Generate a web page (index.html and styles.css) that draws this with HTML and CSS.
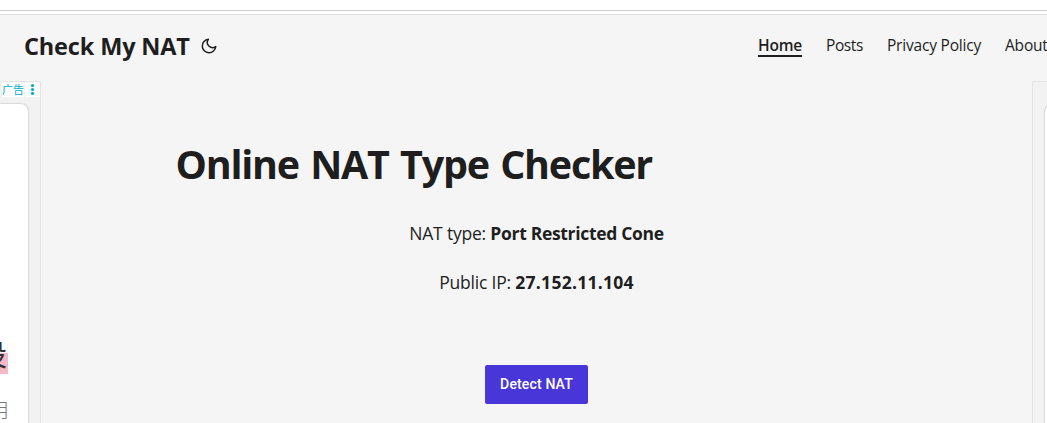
FILE: index.html
```
<!DOCTYPE html>
<html lang="en">

<head>
    <meta charset="UTF-8">
    <meta name="viewport" content="width=device-width, initial-scale=1.0">
    <title>Check My NAT</title>
    <link rel="stylesheet" href="styles.css">
</head>

<body>
    <div class="browser-line"></div>
    <header class="header">
        <div class="logo">
            <a href="#" class="logo-text">Check My NAT</a>
            <button class="theme-toggle" aria-label="Toggle theme">
                <svg width="18" height="18" viewBox="0 0 24 24" fill="none" stroke="currentColor" stroke-width="2" stroke-linecap="round" stroke-linejoin="round">
                    <path d="M21 12.79A9 9 0 1 1 11.21 3 7 7 0 0 0 21 12.79z"></path>
                </svg>
            </button>
        </div>
        <nav class="menu">
            <a href="#" class="active">Home</a>
            <a href="#" class="posts">Posts</a>
            <a href="#" class="privacy">Privacy Policy</a>
            <a href="#" class="about">About</a>
        </nav>
    </header>

    <div class="page">
        <aside class="ad ad-left">
            <div class="ad-bar">
                <span class="ad-label">广告</span>
                <span class="ad-more">
                    <svg width="5" height="11" viewBox="0 0 5 11" fill="currentColor">
                        <circle cx="2.5" cy="1.6" r="1.6"></circle>
                        <circle cx="2.5" cy="5.5" r="1.6"></circle>
                        <circle cx="2.5" cy="9.4" r="1.6"></circle>
                    </svg>
                </span>
            </div>
            <div class="ad-card">
                <div class="ad-title">设</div>
                <div class="ad-text">用</div>
            </div>
        </aside>

        <main class="main">
            <h1>Online NAT Type Checker</h1>
            <p class="nat">NAT type: <b>Port Restricted Cone</b></p>
            <p class="ip">Public IP: <b>27.152.11.104</b></p>
            <button class="detect">Detect NAT</button>
        </main>

        <aside class="ad ad-right">
            <div class="ad-card"></div>
        </aside>
    </div>
</body>

</html>
```

FILE: styles.css
```
* {
    margin: 0;
    padding: 0;
    box-sizing: border-box;
}

body {
    height: 423px;
    overflow: hidden;
    background: #f5f5f5;
    color: #1e1e1e;
    font-family: "Segoe UI", "Open Sans", "Noto Sans CJK SC", sans-serif;
}

a {
    color: inherit;
    text-decoration: none;
}

button {
    border: 0;
    background: none;
    color: inherit;
}

.browser-line {
    height: 15px;
    background: linear-gradient(#cccccc, #cccccc) 0 10px / 100% 1px no-repeat, #ffffff;
    border-bottom: 1px solid #dddddd;
}

/* header */
.header {
    display: flex;
    height: 66px;
    padding-left: 24px;
}

.logo {
    display: flex;
    width: 734px;
    flex-shrink: 0;
}

.logo-text {
    width: 176px;
    font-size: 23.5px;
    font-weight: 700;
    letter-spacing: -0.15px;
    line-height: 62px;
    white-space: nowrap;
}

.theme-toggle {
    height: 62px;
}

.theme-toggle svg {
    display: block;
}

.menu {
    display: flex;
    gap: 24px;
    padding-top: 20px;
    font-size: 15.5px;
    letter-spacing: -0.2px;
    line-height: 21px;
    white-space: nowrap;
}

.menu a {
    height: 22px;
    flex-shrink: 0;
}

.menu .active {
    width: 44px;
    font-weight: 600;
    border-bottom: 2px solid #1e1e1e;
}

.menu .posts {
    width: 37px;
    letter-spacing: -0.4px;
}

.menu .privacy {
    width: 94px;
}

/* page */
.page {
    display: flex;
    height: 342px;
}

.ad {
    flex-shrink: 0;
    overflow: hidden;
    background: #f2f2f2;
    border-top: 1px solid #e4e4e4;
}

.ad-left {
    width: 41px;
    border-right: 1px solid #e4e4e4;
}

.ad-right {
    width: 15px;
    padding: 23px 0 0 12px;
    border-left: 1px solid #e4e4e4;
}

.ad-bar {
    display: flex;
    gap: 1px;
    height: 15px;
    padding-left: 2px;
    color: #00aecd;
}

.ad-label {
    width: 22px;
    background: #ffffff;
    font-size: 11px;
    line-height: 15px;
    white-space: nowrap;
}

.ad-more {
    display: flex;
    flex: 1;
    align-items: center;
    padding-left: 5px;
    background: #ffffff;
}

.ad-card {
    height: 340px;
    background: #ffffff;
    box-shadow: 0 0 2px rgba(0, 0, 0, 0.35);
}

.ad-left .ad-card {
    display: flex;
    flex-direction: column;
    align-items: flex-start;
    width: 28px;
    margin-top: 7px;
    padding-top: 231px;
    border-radius: 0 7px 0 0;
}

.ad-right .ad-card {
    width: 20px;
    border-radius: 7px 0 0 0;
}

.ad-title {
    margin-left: -22px;
    padding-right: 1px;
    background: linear-gradient(#f5b8c6, #f5b8c6) 0 100% / 100% 21px no-repeat;
    color: #333333;
    font-size: 29px;
    font-weight: 400;
    line-height: 39px;
}

.ad-text {
    margin-top: 22px;
    margin-left: -11px;
    color: #777777;
    font-size: 20px;
    font-weight: 300;
    line-height: 30px;
}

.main {
    display: flex;
    flex: 1;
    flex-direction: column;
    align-items: center;
    padding-top: 57px;
}

.main h1 {
    width: 720px;
    font-size: 39.5px;
    font-weight: 700;
    letter-spacing: -1.25px;
    word-spacing: 2.4px;
    line-height: 52px;
    text-indent: -1px;
}

.main p {
    font-size: 17.5px;
    letter-spacing: -0.2px;
    line-height: 29px;
    white-space: nowrap;
}

.main .nat {
    margin-top: 29px;
}

.nat b {
    letter-spacing: -0.32px;
}

.main .ip {
    margin-top: 20px;
}

.ip b {
    letter-spacing: 0.26px;
}

.detect {
    width: 103px;
    height: 39px;
    margin-top: 68px;
    padding-bottom: 1px;
    border-radius: 2px;
    background: #4936d8;
    color: #ffffff;
    font-family: Roboto, sans-serif;
    font-size: 14px;
    font-weight: 500;
    letter-spacing: 0.15px;
}
```
